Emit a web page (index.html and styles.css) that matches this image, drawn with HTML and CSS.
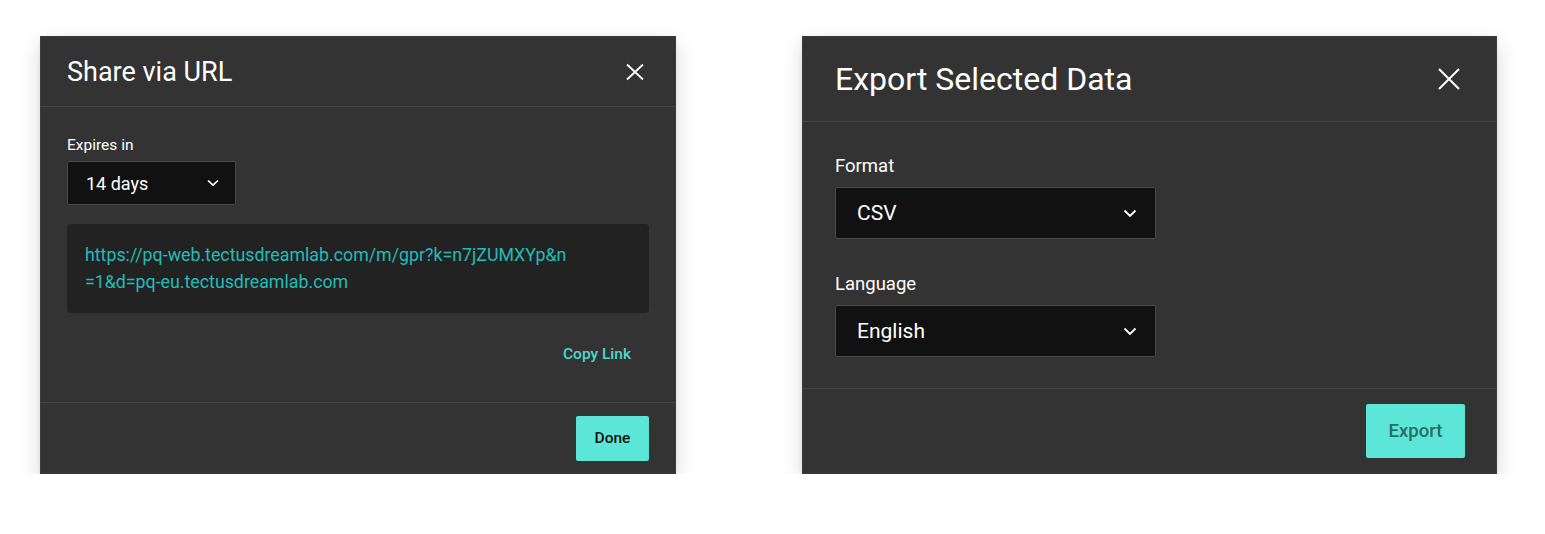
FILE: index.html
```html
<!DOCTYPE html>
<html lang="en">
<head>
<meta charset="utf-8">
<title>Dialogs</title>
<link rel="stylesheet" href="styles.css">
</head>
<body>
<main class="stage">
  <section class="dialog dialog-share">
    <header class="dlg-head">
      <h2 class="dlg-title">Share via URL</h2>
      <button class="close" aria-label="Close">
        <svg width="18" height="18" viewBox="0 0 18 18"><path d="M1 1.5 L17 16.5 M17 1.5 L1 16.5" stroke="#fff" stroke-width="1.8" fill="none"/></svg>
      </button>
    </header>
    <div class="dlg-body">
      <label class="field-label">Expires in</label>
      <div class="select select-sm">
        <span>14 days</span>
        <svg width="12" height="8" viewBox="0 0 12 8"><path d="M1 1.5 L6 6.2 L11 1.5" stroke="#fff" stroke-width="1.7" fill="none"/></svg>
      </div>
      <div class="url-box">https://pq-web.tectusdreamlab.com/m/gpr?k=n7jZUMXYp&amp;n<br>=1&amp;d=pq-eu.tectusdreamlab.com</div>
      <div class="copy-row"><button class="link-btn">Copy Link</button></div>
    </div>
    <footer class="dlg-foot">
      <button class="primary primary-sm">Done</button>
    </footer>
  </section>

  <section class="dialog dialog-export">
    <header class="dlg-head dlg-head-lg">
      <h2 class="dlg-title dlg-title-lg">Export Selected Data</h2>
      <button class="close close-lg" aria-label="Close">
        <svg width="22" height="22" viewBox="0 0 22 22"><path d="M1 1 L21 21 M21 1 L1 21" stroke="#fff" stroke-width="2" fill="none"/></svg>
      </button>
    </header>
    <div class="dlg-body dlg-body-lg">
      <label class="field-label field-label-lg">Format</label>
      <div class="select select-lg">
        <span>CSV</span>
        <svg width="14" height="9" viewBox="0 0 14 9"><path d="M1.5 1.5 L7 7 L12.5 1.5" stroke="#fff" stroke-width="1.8" fill="none"/></svg>
      </div>
      <label class="field-label field-label-lg second">Language</label>
      <div class="select select-lg">
        <span>English</span>
        <svg width="14" height="9" viewBox="0 0 14 9"><path d="M1.5 1.5 L7 7 L12.5 1.5" stroke="#fff" stroke-width="1.8" fill="none"/></svg>
      </div>
    </div>
    <footer class="dlg-foot dlg-foot-lg">
      <button class="primary primary-lg">Export</button>
    </footer>
  </section>
</main>
</body>
</html>
```

FILE: styles.css
```css
* { box-sizing: border-box; }
html, body { margin: 0; padding: 0; background: #ffffff; }
body { font-family: Roboto, "Liberation Sans", sans-serif; }

.stage {
  display: flex;
  align-items: flex-start;
  gap: 126px;
  padding: 36px 0 0 40px;
}

.dialog {
  background: #333333;
  color: #ffffff;
  border: 1px solid #3c3c3c;
  height: 438px;
  display: flex;
  flex-direction: column;
  box-shadow: 0 8px 20px rgba(0, 0, 0, 0.15), 0 1px 4px rgba(0,0,0,0.08);
}
.dialog-share { width: 636px; }
.dialog-export { width: 695px; }

.dlg-head {
  height: 70px;
  flex: none;
  display: flex;
  align-items: center;
  justify-content: space-between;
  padding: 0 31px 0 26px;
  border-bottom: 1px solid #454545;
}
.dlg-head-lg { height: 85px; padding: 0 36px 0 32px; }

.dlg-title {
  margin: 0;
  font-weight: 400;
  font-size: 27px;
  line-height: 30px;
  color: #ffffff;
}
.dlg-title-lg { font-size: 32px; line-height: 36px; }

.close {
  background: none;
  border: 0;
  padding: 0;
  display: flex;
  cursor: pointer;
}

.dlg-body {
  flex: 1;
  padding: 30px 26px 0 26px;
  display: flex;
  flex-direction: column;
  align-items: flex-start;
}
.dlg-body-lg { padding: 34px 32px 0 32px; }

.field-label {
  font-size: 15.5px;
  line-height: 17px;
  color: #ffffff;
  margin-bottom: 7px;
}
.field-label-lg { font-size: 18.5px; line-height: 21px; margin-bottom: 10px; }
.field-label-lg.second { margin-top: 35px; }

.select {
  background: #111111;
  border: 1px solid #484848;
  border-radius: 2px;
  display: flex;
  align-items: center;
  justify-content: space-between;
  color: #ffffff;
}
.select-sm {
  width: 169px;
  height: 44px;
  padding: 0 16px 0 18px;
  font-size: 18px;
}
.select-lg {
  width: 321px;
  height: 52px;
  padding: 0 18px 0 21px;
  font-size: 21px;
}

.url-box {
  align-self: stretch;
  margin-top: 19px;
  background: #222222;
  border-radius: 4px;
  padding: 17px 18px 18px 18px;
  font-size: 17.8px;
  line-height: 27px;
  color: #22bcb9;
  height: 89px;
}

.copy-row {
  align-self: stretch;
  display: flex;
  justify-content: flex-end;
  margin-top: 25px;
}
.link-btn {
  background: none;
  border: 0;
  font-family: inherit;
  font-size: 15.5px;
  font-weight: 500;
  color: #4fd8cb;
  padding: 7px 18px 7px 8px;
  cursor: pointer;
}

.dlg-foot {
  flex: none;
  height: 71px;
  border-top: 1px solid #454545;
  display: flex;
  justify-content: flex-end;
  align-items: center;
  padding: 0 26px;
}
.dlg-foot-lg { height: 85px; padding: 0 31px; }

.primary {
  background: #5ce6d7;
  border: 0;
  border-radius: 2px;
  font-family: inherit;
  cursor: pointer;
}
.primary-sm {
  width: 73px;
  height: 45px;
  font-size: 15.5px;
  font-weight: 500;
  color: #111111;
}
.primary-lg {
  width: 99px;
  height: 54px;
  font-size: 18.5px;
  font-weight: 500;
  color: #2b6c66;
}
```
